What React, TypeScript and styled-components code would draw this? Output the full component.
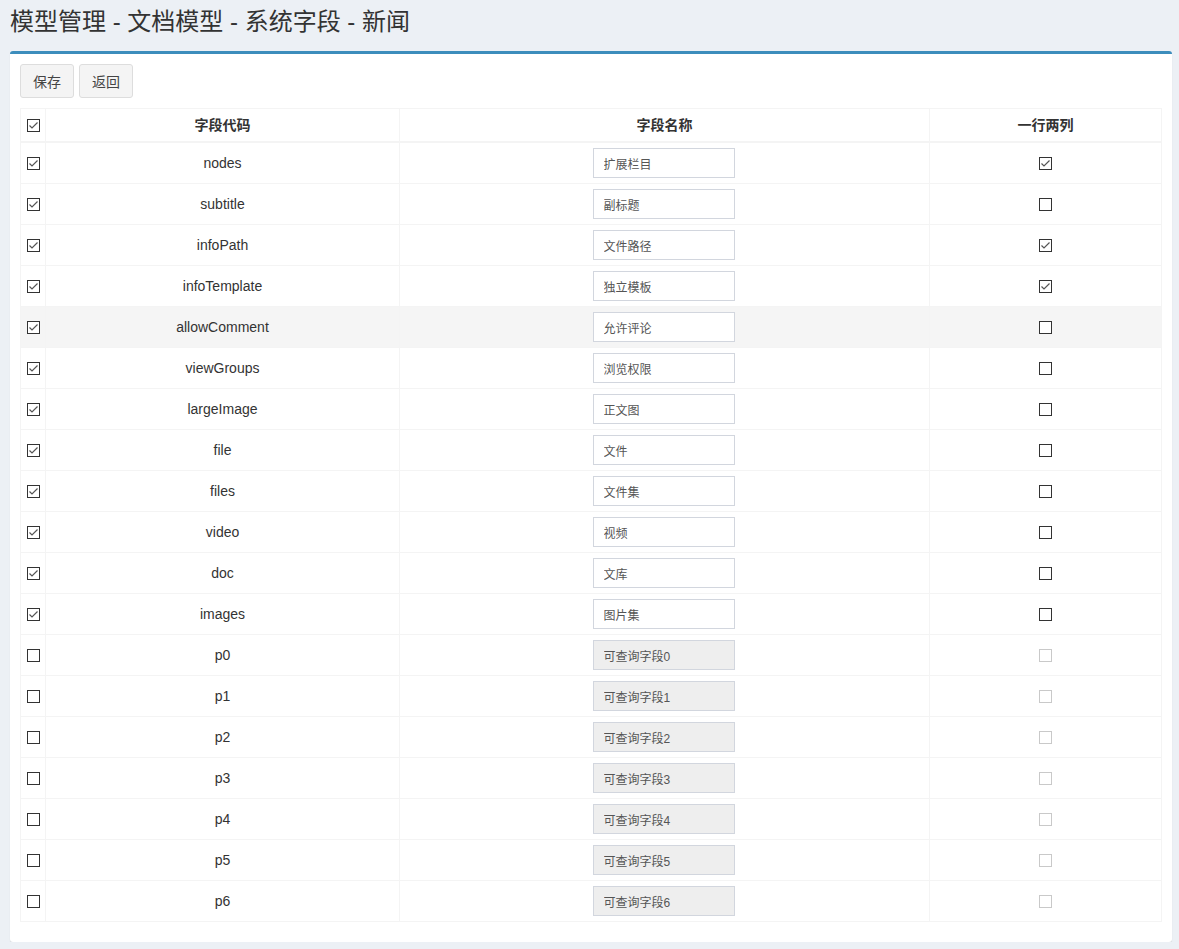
import React from "react";
import styled, { createGlobalStyle } from "styled-components";

type TField = {
  code: string;
  name: string;
  enabled: boolean;
  twoCol: boolean;
};

const GlobalStyle = createGlobalStyle`
  body {
    margin: 0;
    background: #ecf0f5;
    font-family: "Liberation Sans", Arial, "Noto Sans CJK SC", sans-serif;
    font-size: 14px;
    color: #333;
  }
`;

const Header = styled.section`
  padding: 7px 10px 0;
  margin-bottom: 14px;
`;

const Title = styled.h1`
  margin: 0;
  font-size: 24px;
  line-height: 30px;
  font-weight: 400;
  color: #333;
  font-family: "Liberation Sans", Arial, "Noto Sans CJK SC", sans-serif;
`;

const Box = styled.div`
  margin: 0 7px 0 10px;
  background: #fff;
  border-top: 3px solid #3c8dbc;
  border-radius: 3px;
  box-shadow: 0 1px 1px rgba(0, 0, 0, 0.12);
  padding: 10px 10px 20px;
`;

const Toolbar = styled.div`
  display: flex;
  gap: 5px;
  margin-bottom: 10px;
`;

const Button = styled.button`
  height: 34px;
  padding: 0 12px;
  font-size: 14px;
  font-family: "Liberation Sans", Arial, "Noto Sans CJK SC", sans-serif;
  color: #444;
  background: #f4f4f4;
  border: 1px solid #ddd;
  border-radius: 3px;
  cursor: pointer;
`;

const Table = styled.table`
  width: 100%;
  table-layout: fixed;
  border-collapse: collapse;
  border: 1px solid #f4f4f4;
`;

const HeadCell = styled.th`
  border: 1px solid #f4f4f4;
  border-bottom-width: 2px;
  padding: 5px;
  height: 22px;
  line-height: 22px;
  font-size: 14px;
  font-weight: 700;
  text-align: center;
  vertical-align: middle;
  color: #333;
`;

const Row = styled.tr<{ $hover?: boolean }>`
  background: ${({ $hover }) => ($hover ? "#f5f5f5" : "transparent")};
`;

const Cell = styled.td`
  border: 1px solid #f4f4f4;
  padding: 5px;
  height: 30px;
  line-height: 20px;
  text-align: center;
  vertical-align: middle;
`;

const NameInput = styled.input`
  box-sizing: border-box;
  width: 142px;
  height: 30px;
  padding: 5px 10px;
  border: 1px solid #d2d6de;
  border-radius: 0;
  font-size: 12px;
  font-family: "Liberation Sans", Arial, "Noto Sans CJK SC", sans-serif;
  color: #555;
  background: ${({ disabled }) => (disabled ? "#eee" : "#fff")};
  outline: none;
  vertical-align: middle;
  position: relative;
  left: -1px;
`;

const Check = styled.span<{ $disabled?: boolean }>`
  box-sizing: border-box;
  display: inline-block;
  width: 13px;
  height: 13px;
  border: 1px solid ${({ $disabled }) => ($disabled ? "#c9c9c9" : "#333")};
  background: #fff;
  vertical-align: middle;
  position: relative;
  top: -1px;

  svg {
    display: block;
  }
`;

const CheckBox: React.FC<{ checked?: boolean; disabled?: boolean }> = ({ checked, disabled }) => (
  <Check $disabled={disabled}>
    {checked && (
      <svg width="11" height="11" viewBox="0 0 11 11">
        <path d="M1.5 5.5 L4 8 L9.5 2.5" fill="none" stroke="#555" strokeWidth="1.2" />
      </svg>
    )}
  </Check>
);

const fields: TField[] = [
  { code: "nodes", name: "扩展栏目", enabled: true, twoCol: true },
  { code: "subtitle", name: "副标题", enabled: true, twoCol: false },
  { code: "infoPath", name: "文件路径", enabled: true, twoCol: true },
  { code: "infoTemplate", name: "独立模板", enabled: true, twoCol: true },
  { code: "allowComment", name: "允许评论", enabled: true, twoCol: false },
  { code: "viewGroups", name: "浏览权限", enabled: true, twoCol: false },
  { code: "largeImage", name: "正文图", enabled: true, twoCol: false },
  { code: "file", name: "文件", enabled: true, twoCol: false },
  { code: "files", name: "文件集", enabled: true, twoCol: false },
  { code: "video", name: "视频", enabled: true, twoCol: false },
  { code: "doc", name: "文库", enabled: true, twoCol: false },
  { code: "images", name: "图片集", enabled: true, twoCol: false },
  ...[0, 1, 2, 3, 4, 5, 6].map((i) => ({
    code: `p${i}`,
    name: `可查询字段${i}`,
    enabled: false,
    twoCol: false,
  })),
];

export default function App() {
  return (
    <>
      <GlobalStyle />
      <Header>
        <Title>模型管理 - 文档模型 - 系统字段 - 新闻</Title>
      </Header>
      <Box>
        <Toolbar>
          <Button type="button">保存</Button>
          <Button type="button">返回</Button>
        </Toolbar>
        <Table>
          <colgroup>
            <col style={{ width: 25 }} />
            <col style={{ width: 354 }} />
            <col style={{ width: 530 }} />
            <col />
          </colgroup>
          <thead>
            <tr>
              <HeadCell>
                <CheckBox checked />
              </HeadCell>
              <HeadCell>字段代码</HeadCell>
              <HeadCell>字段名称</HeadCell>
              <HeadCell>一行两列</HeadCell>
            </tr>
          </thead>
          <tbody>
            {fields.map((f) => (
              <Row key={f.code} $hover={f.code === "allowComment"}>
                <Cell>
                  <CheckBox checked={f.enabled} />
                </Cell>
                <Cell>{f.code}</Cell>
                <Cell>
                  <NameInput defaultValue={f.name} disabled={!f.enabled} />
                </Cell>
                <Cell>
                  <CheckBox checked={f.twoCol} disabled={!f.enabled} />
                </Cell>
              </Row>
            ))}
          </tbody>
        </Table>
      </Box>
    </>
  );
}
